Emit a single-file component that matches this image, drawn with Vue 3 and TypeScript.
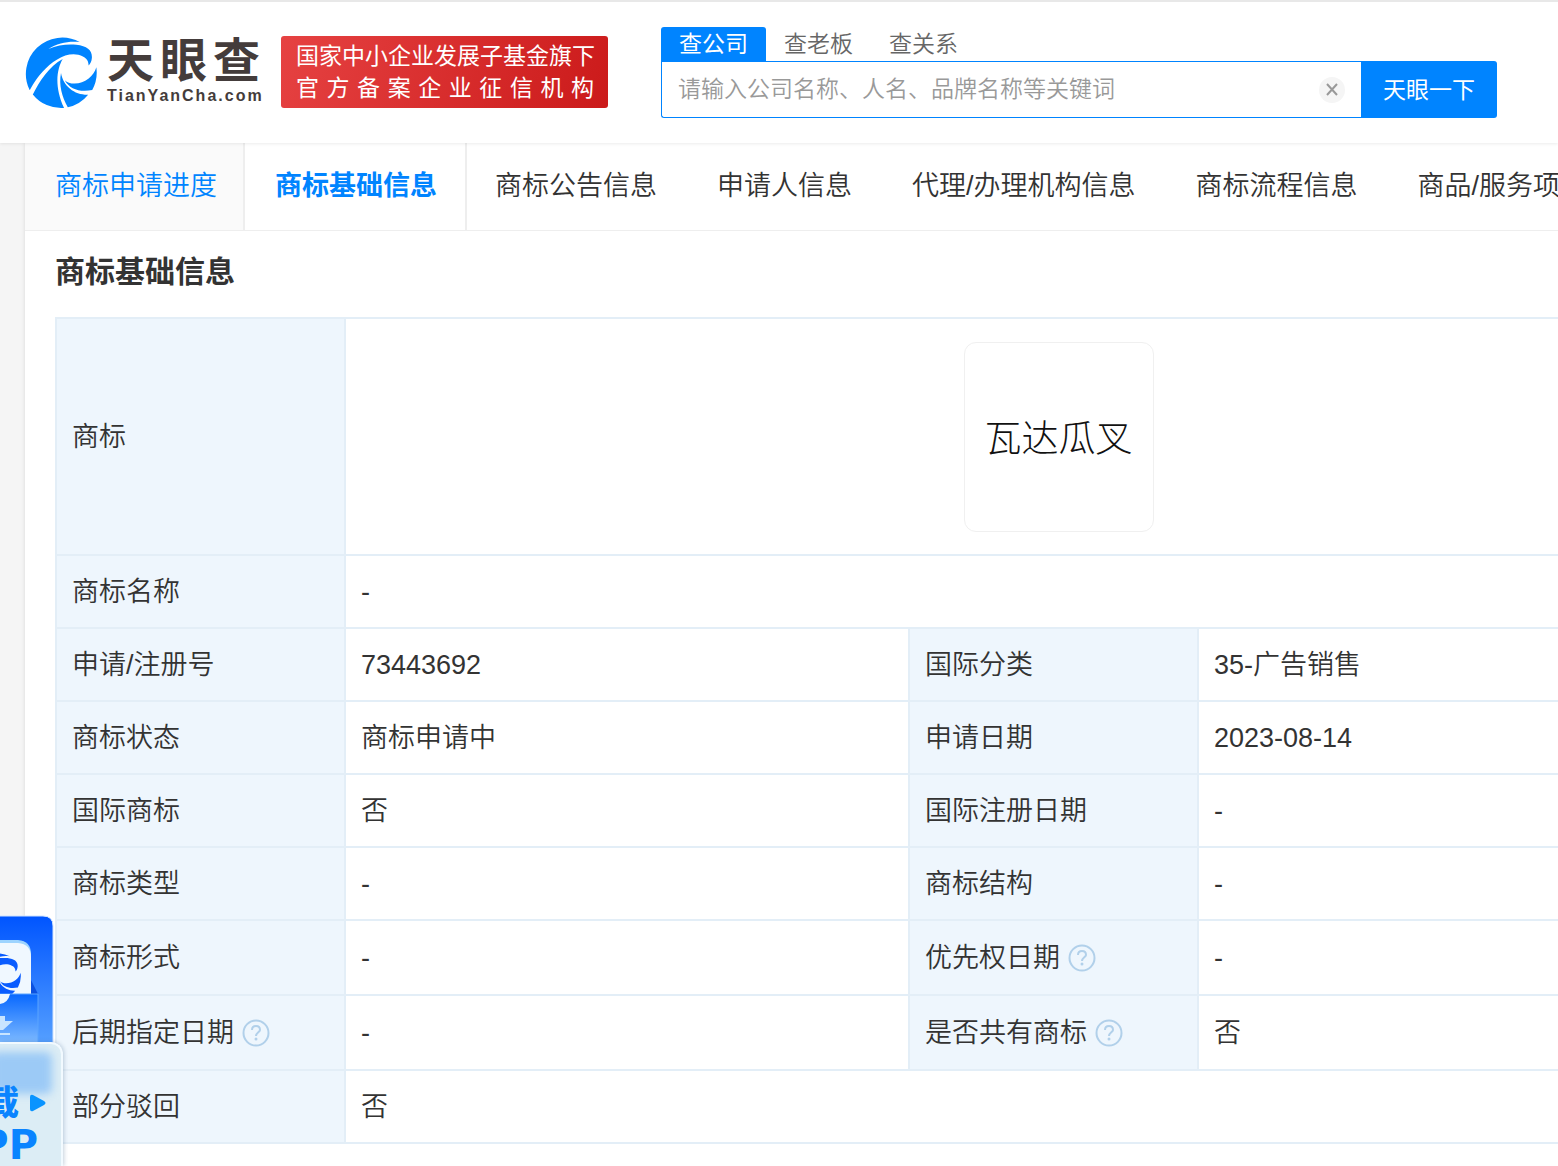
<script setup lang="ts">
interface Field { label: string; value: string; help?: boolean }

const searchTabs: string[] = ['查公司', '查老板', '查关系']
const navTabs: string[] = ['商标申请进度', '商标基础信息', '商标公告信息', '申请人信息', '代理/办理机构信息', '商标流程信息', '商品/服务项目']
const rows: Field[][] = [
  [{ label: '商标名称', value: '-' }],
  [{ label: '申请/注册号', value: '73443692' }, { label: '国际分类', value: '35-广告销售' }],
  [{ label: '商标状态', value: '商标申请中' }, { label: '申请日期', value: '2023-08-14' }],
  [{ label: '国际商标', value: '否' }, { label: '国际注册日期', value: '-' }],
  [{ label: '商标类型', value: '-' }, { label: '商标结构', value: '-' }],
  [{ label: '商标形式', value: '-' }, { label: '优先权日期', value: '-', help: true }],
  [{ label: '后期指定日期', value: '-', help: true }, { label: '是否共有商标', value: '否', help: true }],
  [{ label: '部分驳回', value: '否' }],
]
const markPaths: string[] = [
  'M33 176A107 107 0 0 1 180 34C150 30 115 37 88 54C115 43 145 39 170 42C202 46 217 58 216 80C215 92 211 98 206 103C207 88 198 77 176 71C140 63 100 88 70 122C52 142 40 162 33 176Z',
  'M42 188C62 150 90 105 130 84C112 115 105 165 134 228A107 107 0 0 1 42 188Z',
  'M125 125C118 160 128 195 145 226A107 107 0 0 0 205 189C165 190 132 165 125 125Z',
  'M229 108C222 135 195 155 165 156C152 156 143 152 136 146C150 172 180 182 217 175A107 107 0 0 0 229 108Z',
]
</script>

<template>
  <div class="page">
    <header class="header">
      <a class="logo" href="#" aria-label="天眼查">
        <svg class="logo-mark" viewBox="19 19 212 212" fill="#0084ff" aria-hidden="true">
          <path v-for="d in markPaths" :key="d" :d="d" />
        </svg>
        <span class="logo-text">
          <span class="logo-name">天眼查</span>
          <span class="logo-domain">TianYanCha.com</span>
        </span>
      </a>
      <div class="banner">
        <span>国家中小企业发展子基金旗下</span>
        <span>官方备案企业征信机构</span>
      </div>
      <form class="search" @submit.prevent>
        <div class="search-tabs">
          <button v-for="(t, i) in searchTabs" :key="t" type="button" :class="{ on: i === 0 }">{{ t }}</button>
        </div>
        <div class="search-row">
          <div class="search-box">
            <input type="text" aria-label="搜索" placeholder="请输入公司名称、人名、品牌名称等关键词" />
            <button class="clear" type="button" aria-label="清空">
              <svg viewBox="0 0 26 26"><path d="M8 7L18 18M18 7L8 18" stroke="#999" stroke-width="2" /></svg>
            </button>
          </div>
          <button class="submit" type="submit">天眼一下</button>
        </div>
      </form>
    </header>

    <main class="card">
      <nav class="tabs">
        <a v-for="(t, i) in navTabs" :key="t" href="#" :class="{ visited: i === 0, active: i === 1 }">{{ t }}</a>
      </nav>
      <section class="content">
        <h2>商标基础信息</h2>
        <table>
          <colgroup><col class="c-label" /><col class="c-value" /><col class="c-label" /><col /></colgroup>
          <tbody>
            <tr class="mark-row">
              <th scope="row">商标</th>
              <td colspan="3"><div class="mark">瓦达瓜叉</div></td>
            </tr>
            <tr v-for="row in rows" :key="row[0].label" :class="{ tall: row.some((f) => f.help) }">
              <template v-for="f in row" :key="f.label">
                <th scope="row">
                  <span class="label">{{ f.label }}
                    <svg v-if="f.help" class="help" viewBox="0 0 28 28" aria-hidden="true">
                      <circle cx="14" cy="14" r="12.500" />
                      <path d="M10 11C10 8 12 7 14 7C16 7 18 8 18 11C18 13 14 14 14 17" />
                      <circle class="dot" cx="14" cy="20" r="1.500" />
                    </svg>
                  </span>
                </th>
                <td :colspan="row.length === 1 ? 3 : 1">{{ f.value }}</td>
              </template>
            </tr>
          </tbody>
        </table>
      </section>
    </main>

    <a class="app" href="#" aria-label="下载APP">
      <svg class="app-art" viewBox="0 0 54 134" aria-hidden="true">
        <defs>
          <linearGradient id="ga" x1="0" y1="0" x2="0" y2="1"><stop offset="0" stop-color="#0055ff" /><stop offset="1" stop-color="#5aa4ff" /></linearGradient>
          <linearGradient id="gb" x1="0" y1="0" x2="0" y2="1"><stop offset="0" stop-color="#0868ff" /><stop offset="1" stop-color="#8cc4ff" /></linearGradient>
        </defs>
        <path d="M-2 1H43Q53 1 53 11V136H-2Z" fill="url(#ga)" stroke="#cfe3ff" />
        <path d="M0 25H18Q31 26 31 39V80H0Z" fill="#9dd4ff" />
        <path d="M0 28H18Q31 29 31 42V80H0Z" fill="#f0f8ff" />
        <path d="M31 65L38 79H31Z" fill="#0b50e0" />
        <svg x="-26" y="38" width="47" height="47" viewBox="19 19 212 212" fill="#0a5cff">
          <path v-for="d in markPaths" :key="d" :d="d" />
        </svg>
        <path d="M-1 79H38V134H-1Z" fill="url(#gb)" stroke="#5aa4ff" />
        <path d="M0 79H10Q8 88 0 89Z" fill="#f0f8ff" />
        <path d="M0 101H5V106H13L3 115H0ZM0 118H10V120H0Z" fill="#c8e4ff" />
      </svg>
      <span class="app-label">
        <span class="app-line">载<svg viewBox="0 0 16 18" aria-hidden="true"><path d="M0 3Q0 0 3 1L14 7Q17 9 14 11L3 17Q0 18 0 15Z" fill="#0a94ff" /></svg></span>
        <span class="app-name">APP</span>
      </span>
    </a>
  </div>
</template>

<style>
html, body { margin: 0; background: #f5f5f5; }
</style>

<style scoped>
* { box-sizing: border-box; }
.page {
  position: relative;
  min-height: 100vh;
  overflow: hidden;
  display: flex;
  flex-direction: column;
  font-family: "Liberation Sans", "Noto Sans CJK SC", sans-serif;
  font-weight: 350;
  color: #333;
}
a { color: inherit; text-decoration: none; }
button, input { font: inherit; border: 0; padding: 0; background: none; color: inherit; }
.header {
  position: relative;
  z-index: 1;
  display: flex;
  align-items: flex-start;
  height: 143px;
  padding: 25px 61px 0 25px;
  border-top: 2px solid #e8e8e8;
  background: #fff;
  box-shadow: 0 1px 3px rgba(0, 0, 0, 0.08);
}
.logo { display: flex; gap: 10px; margin-top: 10px; color: #443c3b; }
.logo-mark { width: 72px; height: 72px; }
.logo-text { display: flex; flex-direction: column; width: 153px; }
.logo-name { font-size: 47px; line-height: 48px; font-weight: 700; text-align-last: justify; }
.logo-domain { font-size: 16px; line-height: 22px; font-weight: 700; letter-spacing: 2px; white-space: nowrap; }
.banner {
  display: flex;
  flex-direction: column;
  flex: none;
  width: 327px;
  height: 72px;
  margin: 9px 53px 0 21px;
  padding: 4px 14px 4px 15px;
  border-radius: 3px;
  background: linear-gradient(110deg, #e64242, #cb1a1a);
  color: #fff;
  font-size: 23px;
  font-weight: 400;
  line-height: 32px;
  white-space: nowrap;
}
.banner span { text-align-last: justify; }
.search { flex: 1; min-width: 0; }
.search-tabs { display: flex; color: #666; font-size: 23px; }
.search-tabs button { height: 34px; padding: 0 18px; border-radius: 3px 3px 0 0; line-height: 34px; }
.search-tabs .on { background: #0084ff; color: #fff; font-weight: 400; }
.search-row { display: flex; height: 57px; }
.search-box {
  display: flex;
  align-items: center;
  flex: 1;
  min-width: 0;
  padding: 0 16px;
  border: 1px solid #0084ff;
  border-right: 0;
  border-radius: 0 0 0 3px;
  font-size: 23px;
}
.search-box input { flex: 1; min-width: 0; height: 54px; outline: 0; }
.search-box input::placeholder { color: #999; opacity: 1; }
.clear { width: 26px; height: 26px; border-radius: 50%; background: #f5f5f5; }
.clear svg { display: block; }
.submit { width: 136px; padding-bottom: 3px; border-radius: 0 3px 3px 0; background: #0084ff; color: #fff; font-size: 23px; font-weight: 400; }
.card { flex: 1; margin-left: 25px; background: #fff; box-shadow: 0 0 4px rgba(0, 0, 0, 0.12); }
.tabs { display: flex; height: 88px; border-bottom: 1px solid #eee; font-size: 27px; line-height: 86px; white-space: nowrap; }
.tabs a { flex: none; padding: 0 30px 0 28px; border-right: 2px solid transparent; }
.tabs .visited { padding: 0 26px 0 30px; color: #0084ff; background: #fafafa; border-color: #eee; }
.tabs .active { padding: 0 28px 0 30px; color: #0084ff; font-weight: 700; border-color: #eee; }
.content { padding: 21px 0 22px 30px; }
h2 { margin: 0 0 25px; font-size: 30px; line-height: 40px; font-weight: 700; }
table { width: 100%; min-width: 1718px; table-layout: fixed; border-collapse: collapse; font-size: 27px; line-height: 36px; }
.c-label { width: 289px; }
.c-value { width: 564px; }
th, td { height: 73px; padding: 0 15px; border: 2px solid #e3eef7; text-align: left; font-weight: inherit; }
th { background: #eef6fd; }
.tall th, .tall td { height: 75px; }
.mark-row th, .mark-row td { height: 237px; }
.mark {
  width: 190px;
  height: 190px;
  margin: 0 auto;
  padding-top: 3px;
  border: 1px solid #f0f0f0;
  border-radius: 12px;
  color: #111;
  font-size: 37px;
  font-weight: 300;
  line-height: 188px;
  text-align: center;
}
.label { display: flex; align-items: center; gap: 8px; }
.help { width: 28px; height: 28px; fill: none; stroke: #b1d0ea; stroke-width: 2; }
.help .dot { fill: #b1d0ea; stroke: none; }
.app { position: absolute; z-index: 2; left: 0; bottom: 0; width: 68px; height: 251px; overflow: hidden; }
.app-art { display: block; width: 54px; height: 134px; }
.app-label {
  position: absolute;
  left: 0;
  bottom: 0;
  display: flex;
  flex-direction: column;
  align-items: flex-end;
  width: 63px;
  height: 124px;
  padding: 38px 15px 0 0;
  border-top: 2px solid #f2faff;
  border-right: 2px solid #f2faff;
  border-radius: 0 12px 0 0;
  background: #dcedf5;
  box-shadow: 1px 0 4px rgba(60, 100, 140, 0.3);
  color: #0a84ff;
  font-size: 34px;
  font-weight: 900;
  line-height: 42px;
}
.app-label::before {
  content: "";
  position: absolute;
  left: -8px;
  top: 8px;
  width: 60px;
  height: 42px;
  border-radius: 6px;
  background: #9ccaf6;
  filter: blur(4px);
}
.app-line { position: relative; display: flex; align-items: center; gap: 11px; }
.app-line svg { width: 16px; height: 18px; }
.app-name { position: relative; margin-right: 8px; font-family: "DejaVu Sans", sans-serif; font-size: 40px; }
</style>
